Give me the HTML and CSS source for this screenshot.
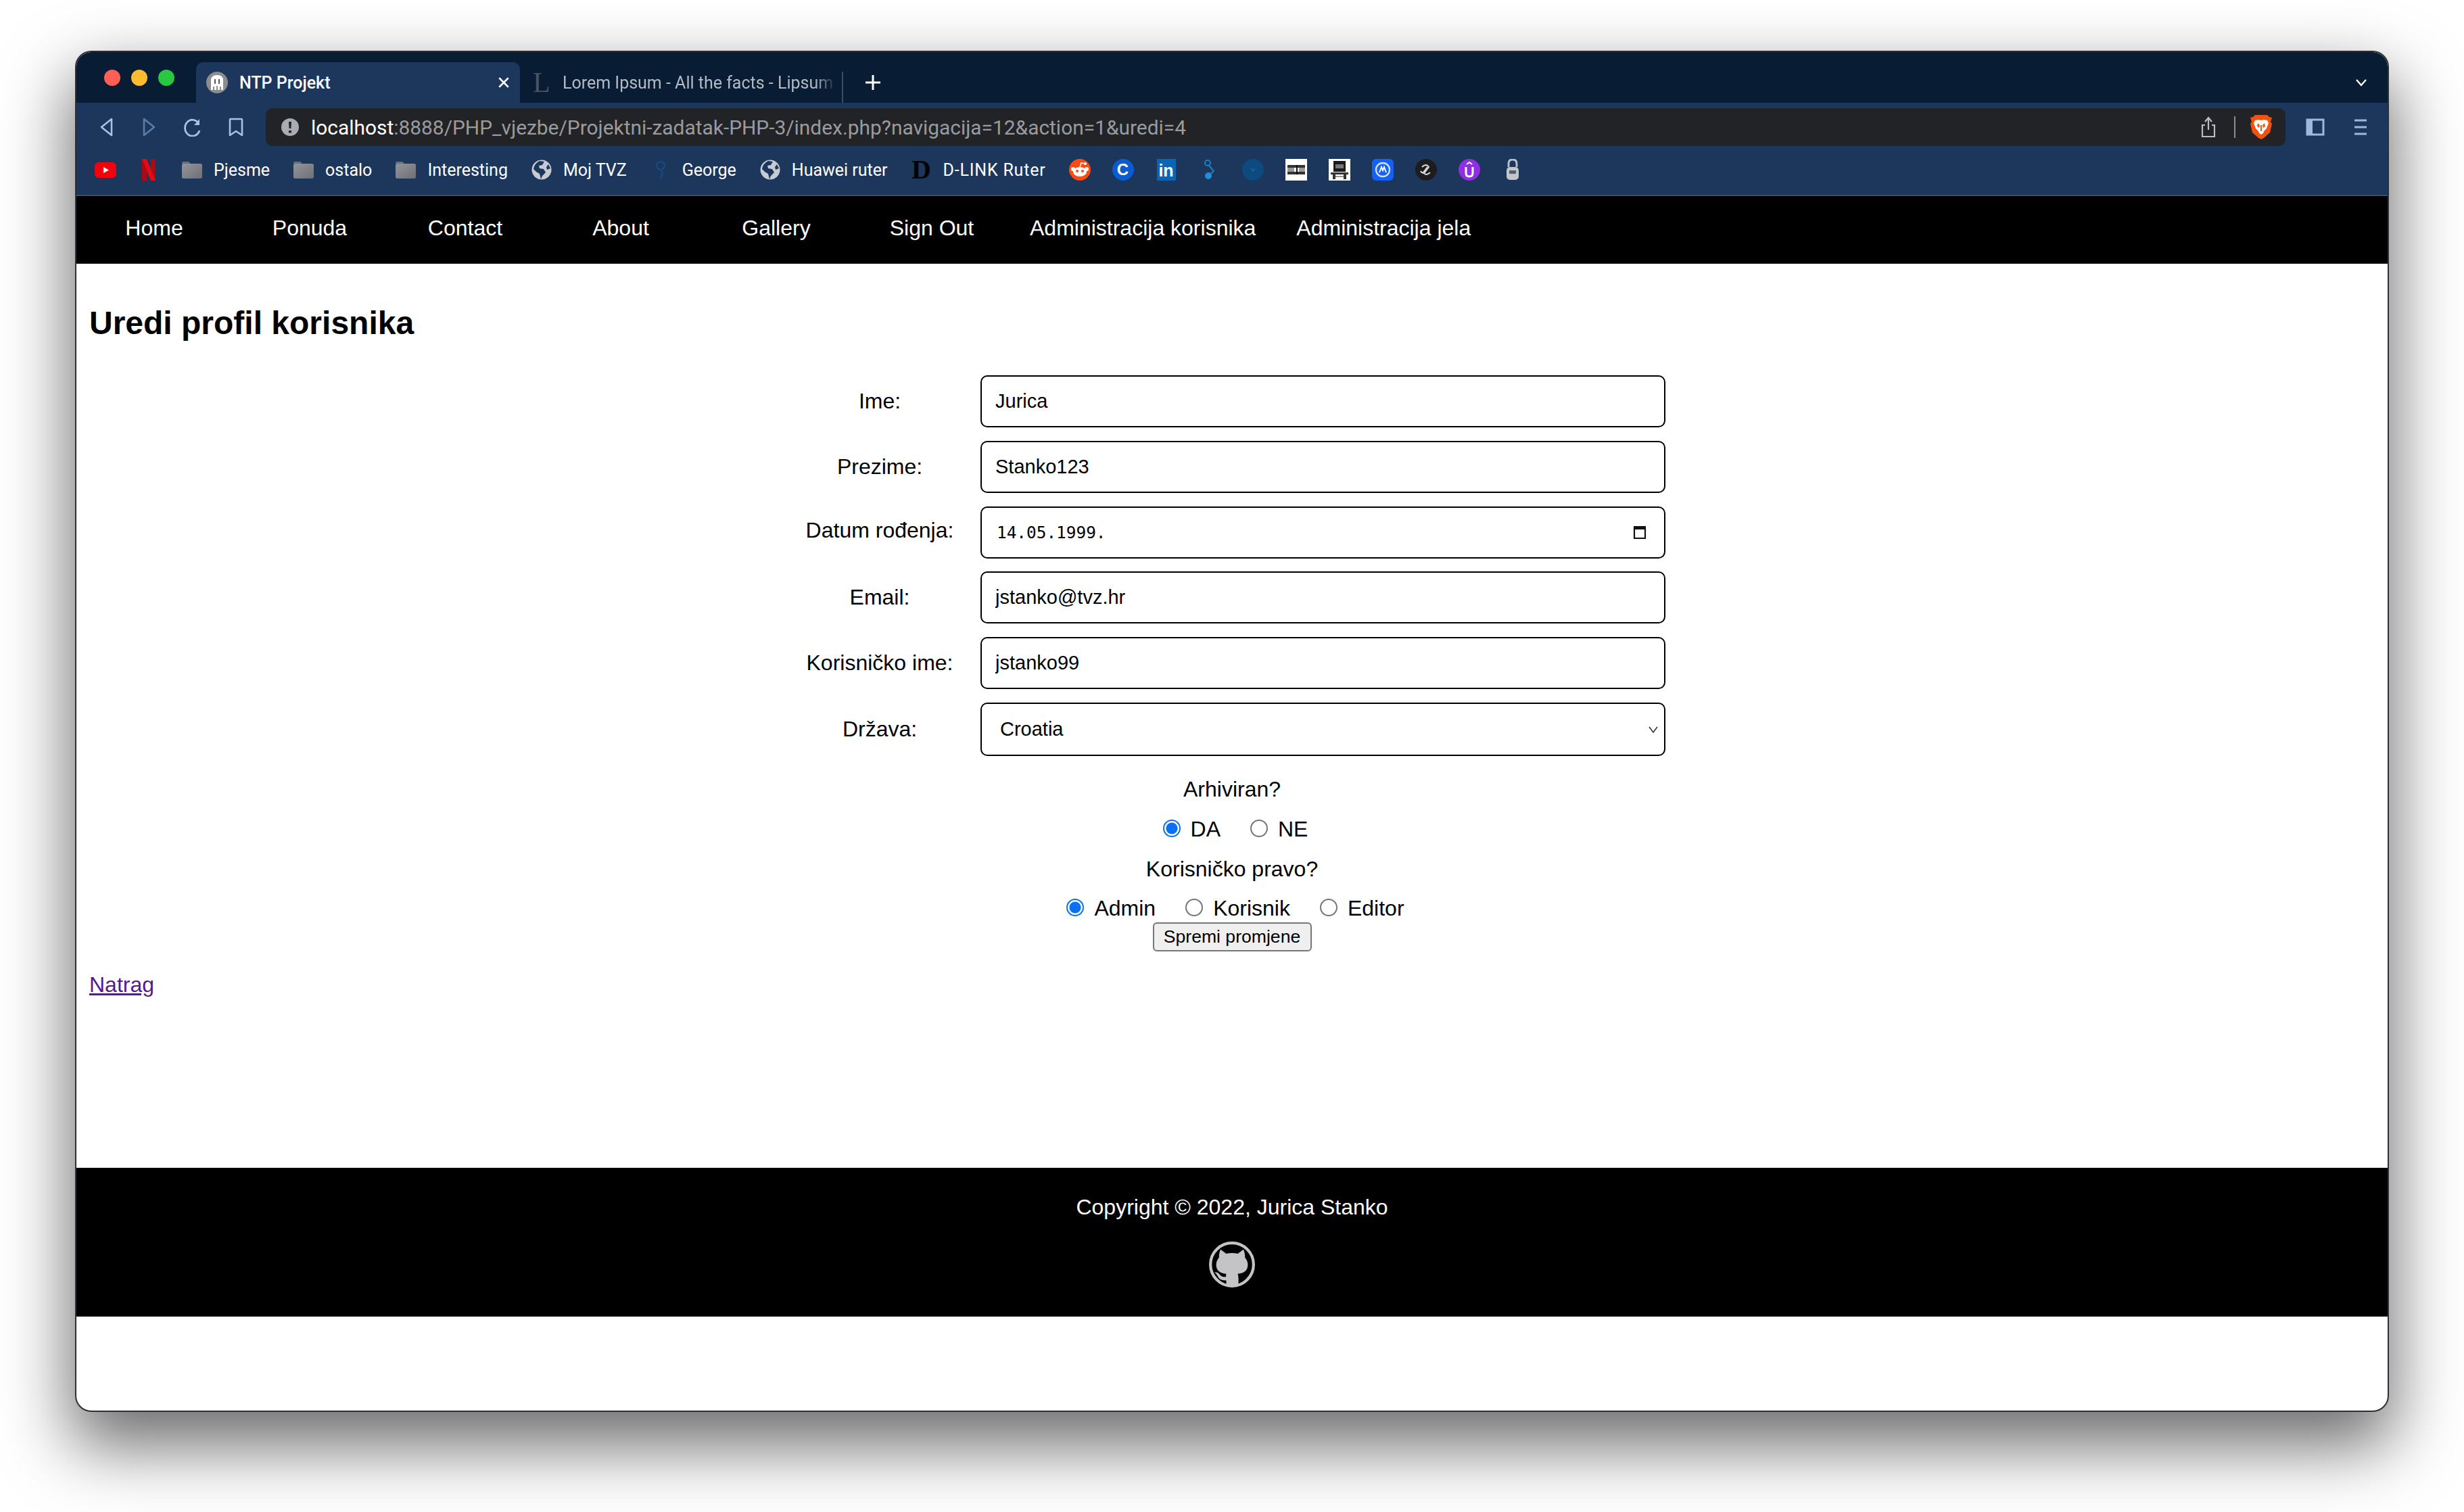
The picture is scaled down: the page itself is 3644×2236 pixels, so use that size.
FILE: index.html
```html
<!DOCTYPE html>
<html lang="en">
<head>
  <meta charset="UTF-8" />
  <meta name="viewport" content="width=device-width, initial-scale=1" />
  <title>NTP Projekt</title>
  <link rel="stylesheet" href="styles.css">
</head>
<body>
  <div class="window">

    <!-- browser tabs -->
    <div class="tabstrip">
      <div class="lights">
        <span class="light light-red"></span>
        <span class="light light-yellow"></span>
        <span class="light light-green"></span>
      </div>
      <div class="tab tab-active">
        <svg class="tab-icon" viewBox="0 0 32 32"><circle cx="16" cy="16" r="16" fill="#8b8d90"/><path d="M7 27V13q0-8 9-8t9 8v14h-3v-5h-2v5h-3v-6h-2v6h-3v-5h-2v5z" fill="#fff"/><path d="M12 11h2v7h-2zM18 11h2v7h-2z" fill="#55585c"/></svg>
        <span class="tab-title">NTP Projekt</span>
        <svg class="tab-close" viewBox="0 0 16 16"><path d="M2 2l12 12M14 2L2 14" stroke="#fff" stroke-width="2.2" fill="none"/></svg>
      </div>
      <div class="tab tab-other">
        <span class="tab-letter">L</span>
        <span class="tab-title tab-title-fade">Lorem Ipsum - All the facts - Lipsum</span>
      </div>
      <svg class="tab-plus" viewBox="0 0 24 24"><path d="M12 1v22M1 12h22" stroke="#fff" stroke-width="3" fill="none"/></svg>
      <svg class="tab-more" viewBox="0 0 18 12"><path d="M2 2l7 8 7-8" stroke="#fff" stroke-width="2.4" fill="none"/></svg>
    </div>

    <!-- address bar -->
    <div class="toolbar">
      <svg class="tool" viewBox="0 0 32 28"><path d="M24 2L9 14l15 12z" stroke="#a9c0de" stroke-width="2.6" fill="none" stroke-linejoin="round"/></svg>
      <svg class="tool" viewBox="0 0 32 28"><path d="M8 2l15 12L8 26z" stroke="#5d7ca6" stroke-width="2.6" fill="none" stroke-linejoin="round"/></svg>
      <svg class="tool" viewBox="0 0 32 28"><path d="M25 9A11 12 0 1 0 26 19" stroke="#a9c0de" stroke-width="2.8" fill="none"/><path d="M26 2v9h-8z" fill="#a9c0de"/></svg>
      <svg class="tool" viewBox="0 0 32 28"><path d="M7 3q0-1 1-1h16q1 0 1 1v23l-9-6-9 6z" stroke="#a9c0de" stroke-width="2.6" fill="none" stroke-linejoin="round"/></svg>
      <div class="url">
        <svg class="url-info" viewBox="0 0 26 26"><circle cx="13" cy="13" r="13" fill="#a9acb1"/><path d="M11 5h4l-.6 10h-2.8zM11 18h4v3.5h-4z" fill="#222327"/></svg>
        <span class="url-text"><span class="url-host">localhost</span>:8888/PHP_vjezbe/Projektni-zadatak-PHP-3/index.php?navigacija=12&amp;action=1&amp;uredi=4</span>
        <svg class="url-share" viewBox="0 0 24 32"><path d="M7 13H3v17h18V13h-4M12 20V3M7 8l5-6 5 6" stroke="#b9bcc0" stroke-width="2.2" fill="none"/></svg>
        <span class="url-sep"></span>
        <svg class="url-brave" viewBox="0 0 32 36"><path d="M7 0h18l3 3 4 1-2 6 2 3-3 13-9 8-4 2-4-2-9-8L0 13l2-3-2-6 4-1z" fill="#f1530f"/><path d="M7 8l5-1 4 1 4-1 5 1 2 4-3 8-4 4-1 3-3 2-3-2-1-3-4-4-3-8z" fill="#fff"/><path d="M11 12l3 3-1 4-3-2zM21 12l-3 3 1 4 3-2zM15 15h2v9h-2z" fill="#f1530f"/></svg>
      </div>
      <svg class="side-panel" viewBox="0 0 28 26"><path d="M2 2h24v22H2z" stroke="#9db8dc" stroke-width="3" fill="none"/><path d="M2 2h8v22H2z" fill="#9db8dc"/></svg>
      <svg class="menu" viewBox="0 0 20 26"><path d="M1 3h18M1 13h18M1 23h18" stroke="#9db8dc" stroke-width="3.2" fill="none"/></svg>
    </div>

    <!-- bookmarks -->
    <div class="bookmarks">
      <svg class="bm-icon" viewBox="0 0 32 32"><rect y="5" width="32" height="23" rx="6" fill="#f5000c"/><path d="M13 12l8 4.500-8 4.500z" fill="#fff"/></svg>
      <svg class="bm-icon" viewBox="0 0 32 32"><rect x="6" width="7" height="32" fill="#a80b14"/><rect x="19" width="7" height="32" fill="#a80b14"/><path d="M6 0h7l13 32h-7z" fill="#e50914"/></svg>
      <div class="bm"><svg class="bm-icon" viewBox="0 0 32 32"><use href="#folder"/></svg><span>Pjesme</span></div>
      <div class="bm"><svg class="bm-icon" viewBox="0 0 32 32"><use href="#folder"/></svg><span>ostalo</span></div>
      <div class="bm"><svg class="bm-icon" viewBox="0 0 32 32"><use href="#folder"/></svg><span>Interesting</span></div>
      <div class="bm"><svg class="bm-icon" viewBox="0 0 32 32"><use href="#globe"/></svg><span>Moj TVZ</span></div>
      <div class="bm"><svg class="bm-icon" viewBox="0 0 32 32"><circle cx="16" cy="10" r="6" stroke="#144a80" stroke-width="2.5" fill="none"/><path d="M17 16q3 8-2 14" stroke="#144a80" stroke-width="2.5" fill="none"/></svg><span>George</span></div>
      <div class="bm"><svg class="bm-icon" viewBox="0 0 32 32"><use href="#globe"/></svg><span>Huawei ruter</span></div>
      <div class="bm"><span class="bm-d">D</span><span class="bm-wide">D-LINK Ruter</span></div>
      <svg class="bm-icon" viewBox="0 0 32 32"><circle cx="16" cy="16" r="16" fill="#fb4a12"/><ellipse cx="16" cy="19" rx="10" ry="7" fill="#fff"/><circle cx="6" cy="15" r="3" fill="#fff"/><circle cx="26" cy="15" r="3" fill="#fff"/><circle cx="12" cy="18" r="2" fill="#fb4a12"/><circle cx="20" cy="18" r="2" fill="#fb4a12"/><path d="M16 12l2-6 5 1" stroke="#fff" stroke-width="1.600" fill="none"/><circle cx="24" cy="7" r="2" fill="#fff"/></svg>
      <span class="bm-badge bm-badge-c">C</span>
      <span class="bm-badge bm-badge-in">in</span>
      <svg class="bm-icon" viewBox="0 0 32 32"><circle cx="13" cy="6" r="4" stroke="#1c7fc0" stroke-width="2" fill="none"/><path d="M15 10l7 8-7 6" stroke="#1c7fc0" stroke-width="2" fill="none"/><circle cx="14" cy="25" r="5" fill="#1c8fd6"/></svg>
      <svg class="bm-icon" viewBox="0 0 32 32"><circle cx="16" cy="16" r="16" fill="#0c4a80"/><path d="M13 14l3 4 3-4" stroke="#1e5f98" stroke-width="2" fill="none"/></svg>
      <svg class="bm-icon" viewBox="0 0 32 32"><rect width="32" height="32" fill="#fff"/><path d="M3 9h26v4H3zM3 19h26v4H3z" fill="#333"/><path d="M3 13h10v6H3zM20 13h9v6h-9z" fill="#999"/><path d="M16 9h2v14h-2z" fill="#111"/></svg>
      <svg class="bm-icon" viewBox="0 0 32 32"><rect width="32" height="32" fill="#fff"/><path d="M7 3h18v16H7z" fill="#1a1a1a"/><path d="M10 8h12v6H10z" fill="#777"/><path d="M3 20h26v3H3zM6 23h4v7H6zM22 23h4v7h-4z" fill="#333"/><path d="M10 25h12v2H10z" fill="#999"/></svg>
      <svg class="bm-icon" viewBox="0 0 32 32"><rect width="32" height="32" rx="6" fill="#1560f5"/><circle cx="16" cy="16" r="10" stroke="#cfe0ff" stroke-width="2.400" fill="none"/><path d="M11 20l3-8 2 5 2-5 3 8" stroke="#fff" stroke-width="2" fill="none"/></svg>
      <svg class="bm-icon" viewBox="0 0 32 32"><circle cx="16" cy="16" r="16" fill="#1d1d1f"/><path d="M10 12q6-6 10 0l-6 8q-4 2-6-2M22 20q-6 6-10 0l6-8" stroke="#d8d8d8" stroke-width="2" fill="none"/></svg>
      <svg class="bm-icon" viewBox="0 0 32 32"><circle cx="16" cy="16" r="16" fill="#8f2fe0"/><path d="M11 12v9q0 5 5 5t5-5v-9" stroke="#fff" stroke-width="3" fill="none"/><path d="M12 8l4-3 4 3" stroke="#fff" stroke-width="2" fill="none"/></svg>
      <svg class="bm-icon" viewBox="0 0 32 32"><path d="M10 12V7q0-6 6-6t6 6v5" stroke="#b9bdc4" stroke-width="3" fill="none"/><rect x="7" y="12" width="18" height="19" rx="5" fill="#c3c6cb"/><rect x="11" y="17" width="10" height="5" fill="#57606c"/></svg>
    </div>

    <!-- page -->
    <nav class="nav">
      <a class="nav-link" href="#">Home</a>
      <a class="nav-link" href="#">Ponuda</a>
      <a class="nav-link" href="#">Contact</a>
      <a class="nav-link" href="#">About</a>
      <a class="nav-link" href="#">Gallery</a>
      <a class="nav-link" href="#">Sign Out</a>
      <a class="nav-link" href="#">Administracija korisnika</a>
      <a class="nav-link" href="#">Administracija jela</a>
    </nav>

    <main class="content">
      <h1 class="title">Uredi profil korisnika</h1>

      <form class="form">
        <div class="rows">
          <label class="row-label">Ime:</label>
          <input class="field" type="text" value="Jurica">
          <label class="row-label">Prezime:</label>
          <input class="field" type="text" value="Stanko123">
          <label class="row-label row-label-up">Datum rođenja:</label>
          <div class="field field-date">
            <span class="date-value">14.05.1999.</span>
            <svg class="date-icon" viewBox="0 0 20 22"><path d="M2 6h16v14H2z" stroke="#111" stroke-width="2.200" fill="none"/><path d="M1 2h18v5H1z" fill="#111"/></svg>
          </div>
          <label class="row-label">Email:</label>
          <input class="field" type="text" value="jstanko@tvz.hr">
          <label class="row-label">Korisničko ime:</label>
          <input class="field" type="text" value="jstanko99">
          <label class="row-label">Država:</label>
          <div class="select-wrap">
            <select class="field field-select"><option>Croatia</option></select>
            <svg class="select-arrow" viewBox="0 0 16 12"><path d="M2 2l6 8 6-8" stroke="#333" stroke-width="1.600" fill="none"/></svg>
          </div>
        </div>

        <div class="question question-first">Arhiviran?</div>
        <div class="radios">
          <label class="radio"><input type="radio" name="arhiviran" checked>DA</label>
          <label class="radio"><input type="radio" name="arhiviran">NE</label>
        </div>
        <div class="question">Korisničko pravo?</div>
        <div class="radios radios-last">
          <label class="radio"><input type="radio" name="pravo" checked>Admin</label>
          <label class="radio"><input type="radio" name="pravo">Korisnik</label>
          <label class="radio"><input type="radio" name="pravo">Editor</label>
        </div>
        <button class="save" type="button">Spremi promjene</button>
      </form>

      <a class="back" href="#">Natrag</a>
    </main>

    <footer class="footer">
      <div>Copyright © 2022, Jurica Stanko</div>
      <svg class="github" viewBox="0 0 32 32">
        <ellipse cx="16" cy="16" rx="15" ry="15" stroke="#c4c4c6" stroke-width="2" fill="none"/>
        <path d="M8 5.500L12 8.500Q16 7.500 20 8.500L24 5.500Q25.300 9 25 11Q27 13.500 27 16Q27 22 20 22.500Q20.500 24 20.500 26L20.500 30Q16 31 12 30V27Q7.500 27.500 6 24Q5 22 3.800 21.500Q6 21 7.500 23Q9 25 12 24.500Q11.500 23 12 22.500Q5 22 5 16Q5 13.500 7 11Q6.700 9 8 5.500Z" fill="#c4c4c6"/>
      </svg>
    </footer>
  </div>

  <!-- shared bookmark icons -->
  <svg class="defs" width="0" height="0">
    <defs>
      <linearGradient id="folder-fill" x1="0" y1="0" x2="1" y2="1">
        <stop offset="0" stop-color="#94959a"/>
        <stop offset="1" stop-color="#6f7075"/>
      </linearGradient>
      <g id="folder">
        <path d="M1 6q0-2 2-2h8l3 3H1z" fill="#6d6f74"/>
        <rect x="1" y="7" width="30" height="22" rx="2.500" fill="url(#folder-fill)"/>
      </g>
      <g id="globe">
        <circle cx="16" cy="16" r="14.500" fill="#c6cbd3"/>
        <path d="M13 3l7 1-3 5-5 1 1 4 6 1 3 5-5 5-2 5-2-8-5-3-4-4q1-8 9-12zM26 8l3 6-5 2-1-4z" fill="#1d365c"/>
      </g>
    </defs>
  </svg>
</body>
</html>
```

FILE: styles.css
```css
* {
  box-sizing: border-box;
}
html,
body {
  margin: 0;
  background: #fff;
}
body {
  height: 2236px;
  padding: 75px 111px 0;
  overflow: hidden;
  font-family: "Liberation Sans", Arial, sans-serif;
  font-size: 32px;
  color: #000;
}
.defs {
  position: absolute;
}

/* window */
.window {
  display: flex;
  flex-direction: column;
  height: 2013px;
  background: #fff;
  border: 2px solid #2c3036;
  border-radius: 24px;
  overflow: hidden;
  box-shadow: 0 44px 100px 6px rgba(0, 0, 0, 0.58);
}

/* tabs */
.tabstrip {
  display: flex;
  align-items: flex-end;
  height: 75px;
  padding-left: 41px;
  background: #081c33;
}
.lights {
  display: flex;
  gap: 16px;
  align-self: flex-start;
  margin-top: 26px;
  margin-right: 32px;
}
.light {
  width: 24px;
  height: 24px;
  border-radius: 50%;
}
.light-red { background: #ff5f57; }
.light-yellow { background: #febc2e; }
.light-green { background: #28c840; }
.tab {
  display: flex;
  align-items: center;
  height: 60px;
  font-family: Roboto, sans-serif;
  font-size: 25px;
  color: #fff;
}
.tab-active {
  width: 479px;
  padding: 0 15px;
  background: #1d365c;
  border-radius: 10px 10px 0 0;
  font-weight: 500;
}
.tab-icon {
  width: 32px;
  height: 32px;
  margin-right: 17px;
}
.tab-close {
  width: 18px;
  height: 18px;
  margin-left: auto;
}
.tab-other {
  width: 478px;
  height: 46px;
  padding: 0 0 14px 19px;
  color: #b4bbc5;
  border-right: 2px solid #3a4c66;
}
.tab-letter {
  width: 44px;
  font-family: "Liberation Serif", serif;
  font-size: 42px;
  line-height: 1;
  color: #4a535f;
}
.tab-title-fade {
  width: 405px;
  white-space: nowrap;
  overflow: hidden;
  -webkit-mask-image: linear-gradient(to right, #000 92%, transparent);
  mask-image: linear-gradient(to right, #000 92%, transparent);
}
.tab-plus {
  width: 24px;
  height: 24px;
  margin: 0 0 18px 32px;
}
.tab-more {
  width: 18px;
  height: 12px;
  margin: 0 30px 24px auto;
}

/* address bar */
.toolbar {
  display: flex;
  align-items: flex-start;
  gap: 32px;
  height: 64px;
  padding: 8px 0 0 28px;
  background: #1d365c;
}
.tool {
  width: 32px;
  height: 28px;
  margin-top: 14px;
}
.url {
  display: flex;
  align-items: center;
  flex: 1;
  height: 56px;
  margin-left: -4px;
  padding: 0 20px 0 23px;
  background: #222327;
  border-radius: 10px;
}
.url-info {
  width: 26px;
  height: 26px;
  margin-right: 18px;
}
.url-text {
  font-family: Roboto, sans-serif;
  font-size: 29.9px;
  color: #9a9b9e;
  white-space: nowrap;
}
.url-host {
  color: #fff;
}
.url-share {
  width: 24px;
  height: 32px;
  margin-left: auto;
}
.url-sep {
  width: 2px;
  height: 32px;
  margin: 0 22px 0 26px;
  background: #8c8e92;
}
.url-brave {
  width: 32px;
  height: 36px;
}
.side-panel {
  width: 28px;
  height: 26px;
  margin: 15px 0 0 -2px;
}
.menu {
  width: 20px;
  height: 26px;
  margin: 15px 30px 0 11px;
}

/* bookmarks */
.bookmarks {
  display: flex;
  align-items: center;
  gap: 32px;
  height: 74px;
  padding: 0 0 2px 27px;
  background: #1d365c;
  border-bottom: 2px solid #35506f;
  font-family: Roboto, sans-serif;
  font-size: 25px;
  color: #fff;
}
.bm {
  display: flex;
  align-items: center;
  gap: 16px;
  margin-right: 2px;
}
.bm-wide {
  letter-spacing: 0.8px;
}
.bm-icon {
  width: 32px;
  height: 32px;
  flex: none;
}
.bm-d {
  width: 32px;
  font-family: "Liberation Serif", serif;
  font-size: 40px;
  font-weight: bold;
  line-height: 32px;
  text-align: center;
  color: #050505;
}
.bm-badge {
  display: block;
  width: 32px;
  height: 32px;
  font-family: "Liberation Sans", sans-serif;
  font-weight: bold;
  text-align: center;
  color: #fff;
}
.bm-badge-c {
  background: #0a5cd0;
  border-radius: 50%;
  font-size: 24px;
  line-height: 32px;
}
.bm-badge-in {
  width: 28px;
  margin: 0 2px;
  background: #0a66b5;
  font-size: 25px;
  line-height: 34px;
}

/* page nav */
.nav {
  display: flex;
  align-items: center;
  flex: none;
  height: 100px;
  padding: 0 0 5px;
  background: #000;
}
.nav-link {
  min-width: 230px;
  padding: 0 30px;
  text-align: center;
  color: #fff;
  text-decoration: none;
  white-space: nowrap;
}

/* content */
.content {
  flex: none;
  height: 1337px;
  padding: 60px 19px 0;
}
.title {
  margin: 0;
  font-size: 48px;
  line-height: 56px;
  font-weight: bold;
}
.form {
  margin-top: 49px;
}
.rows {
  display: grid;
  grid-template-columns: 240px 1013px;
  column-gap: 29px;
  row-gap: 19.8px;
  align-items: center;
  justify-content: center;
}
.row-label {
  text-align: center;
}
.row-label-up {
  padding-bottom: 5px;
}
.field {
  width: 100%;
  height: 77px;
  padding: 0 20px;
  background: #fff;
  border: 2.5px solid #000;
  border-radius: 10px;
  outline: none;
  font-family: "Liberation Sans", Arial, sans-serif;
  font-size: 29px;
  color: #000;
}
.field-date {
  display: flex;
  align-items: center;
  justify-content: space-between;
  padding: 0 26px 0 22px;
}
.date-value {
  font-family: "DejaVu Sans Mono", monospace;
  font-size: 24.4px;
  line-height: 1;
  padding-top: 2px;
}
.date-icon {
  width: 20px;
  height: 22px;
}
.select-wrap {
  position: relative;
}
.field-select {
  display: block;
  height: 79px;
  padding-left: 27px;
  appearance: none;
  -webkit-appearance: none;
}
.select-arrow {
  position: absolute;
  top: 34px;
  right: 10px;
  width: 16px;
  height: 12px;
}
.question {
  height: 59px;
  line-height: 59px;
  text-align: center;
}
.question-first {
  margin-top: 20px;
}
.radios {
  display: flex;
  align-items: center;
  justify-content: center;
  gap: 44px;
  height: 59px;
  padding-left: 10px;
}
.radios-last {
  height: 49px;
  padding-top: 9px;
}
.radio {
  display: inline-flex;
  align-items: center;
  gap: 15px;
}
.radio input {
  width: 26px;
  height: 26px;
  margin: 0 0 3px;
  appearance: none;
  -webkit-appearance: none;
  background: #fff;
  border: 2.5px solid #767676;
  border-radius: 50%;
}
.radio input:checked {
  border-color: #0a72f0;
  background: radial-gradient(circle, #0a72f0 0 8px, #fff 9px);
}
.save {
  display: block;
  width: 235px;
  height: 43px;
  margin: 0 auto;
  padding: 0;
  background: #efefef;
  border: 2px solid #767676;
  border-radius: 6px;
  font-family: "Liberation Sans", Arial, sans-serif;
  font-size: 26.6px;
  color: #000;
}
.back {
  display: inline-block;
  margin-top: 31px;
  line-height: 37px;
  color: #551a8b;
}

/* footer */
.footer {
  flex: none;
  height: 220px;
  padding-top: 40px;
  background: #000;
  color: #fff;
  line-height: 37px;
  text-align: center;
}
.github {
  display: block;
  width: 68px;
  height: 68px;
  margin: 32px auto 0;
}
```
